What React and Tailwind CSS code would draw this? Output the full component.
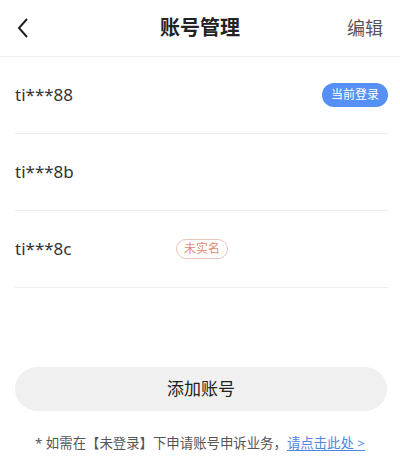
import React from "react";

const accounts = [
  { name: "ti***88", current: true },
  { name: "ti***8b" },
  { name: "ti***8c", unverified: true },
];

export default function App() {
  return (
    <div
      className="w-[400px] h-[464px] bg-white flex flex-col text-[#222]"
      style={{ fontFamily: '"Noto Sans", "Noto Sans CJK SC", sans-serif' }}
    >
      {/* header */}
      <div className="h-[57px] flex items-center justify-between pl-[15px] pr-[15px] border-b border-[#ececec] relative">
        <svg width="14" height="22" viewBox="0 0 14 22" className="ml-[1px]">
          <path d="M11 2 L3 11 L11 20" fill="none" stroke="#222" strokeWidth="2" />
        </svg>
        <div className="absolute left-0 right-0 text-center text-[20px] font-bold pointer-events-none">
          账号管理
        </div>
        <div className="text-[18px] text-[#555] mr-[2px]">编辑</div>
      </div>

      {/* rows */}
      <div className="pl-[15px] pr-[12px]">
        {accounts.map((a) => (
          <div
            key={a.name}
            className="h-[77px] flex items-center border-b border-[#ececec]"
          >
            <span className="w-[161px] text-[17px] text-[#333]">{a.name}</span>
            {a.unverified && (
              <span className="h-[20px] px-[7px] rounded-full border border-[#ecc6bb] text-[12px] text-[#e08a6f] flex items-center leading-none">
                未实名
              </span>
            )}
            {a.current && (
              <span className="ml-auto h-[24px] w-[66px] rounded-full bg-[#5690f5] text-white text-[12px] flex items-center justify-center leading-none">
                当前登录
              </span>
            )}
          </div>
        ))}
      </div>

      <div className="flex-1" />

      {/* add button */}
      <div className="pl-[15px] pr-[13px]">
        <div className="h-[44px] rounded-full bg-[#f0f0f0] flex items-center justify-center text-[17px] text-[#222]">
          添加账号
        </div>
      </div>

      <div className="mt-[22px] mb-[11px] h-[20px] flex items-center justify-center text-[13.4px] text-[#555] leading-[20px]">
        <span>* 如需在【未登录】下申请账号申诉业务，</span>
        <span className="text-[#4f86e0] underline underline-offset-2">请点击此处 &gt;</span>
      </div>
    </div>
  );
}
